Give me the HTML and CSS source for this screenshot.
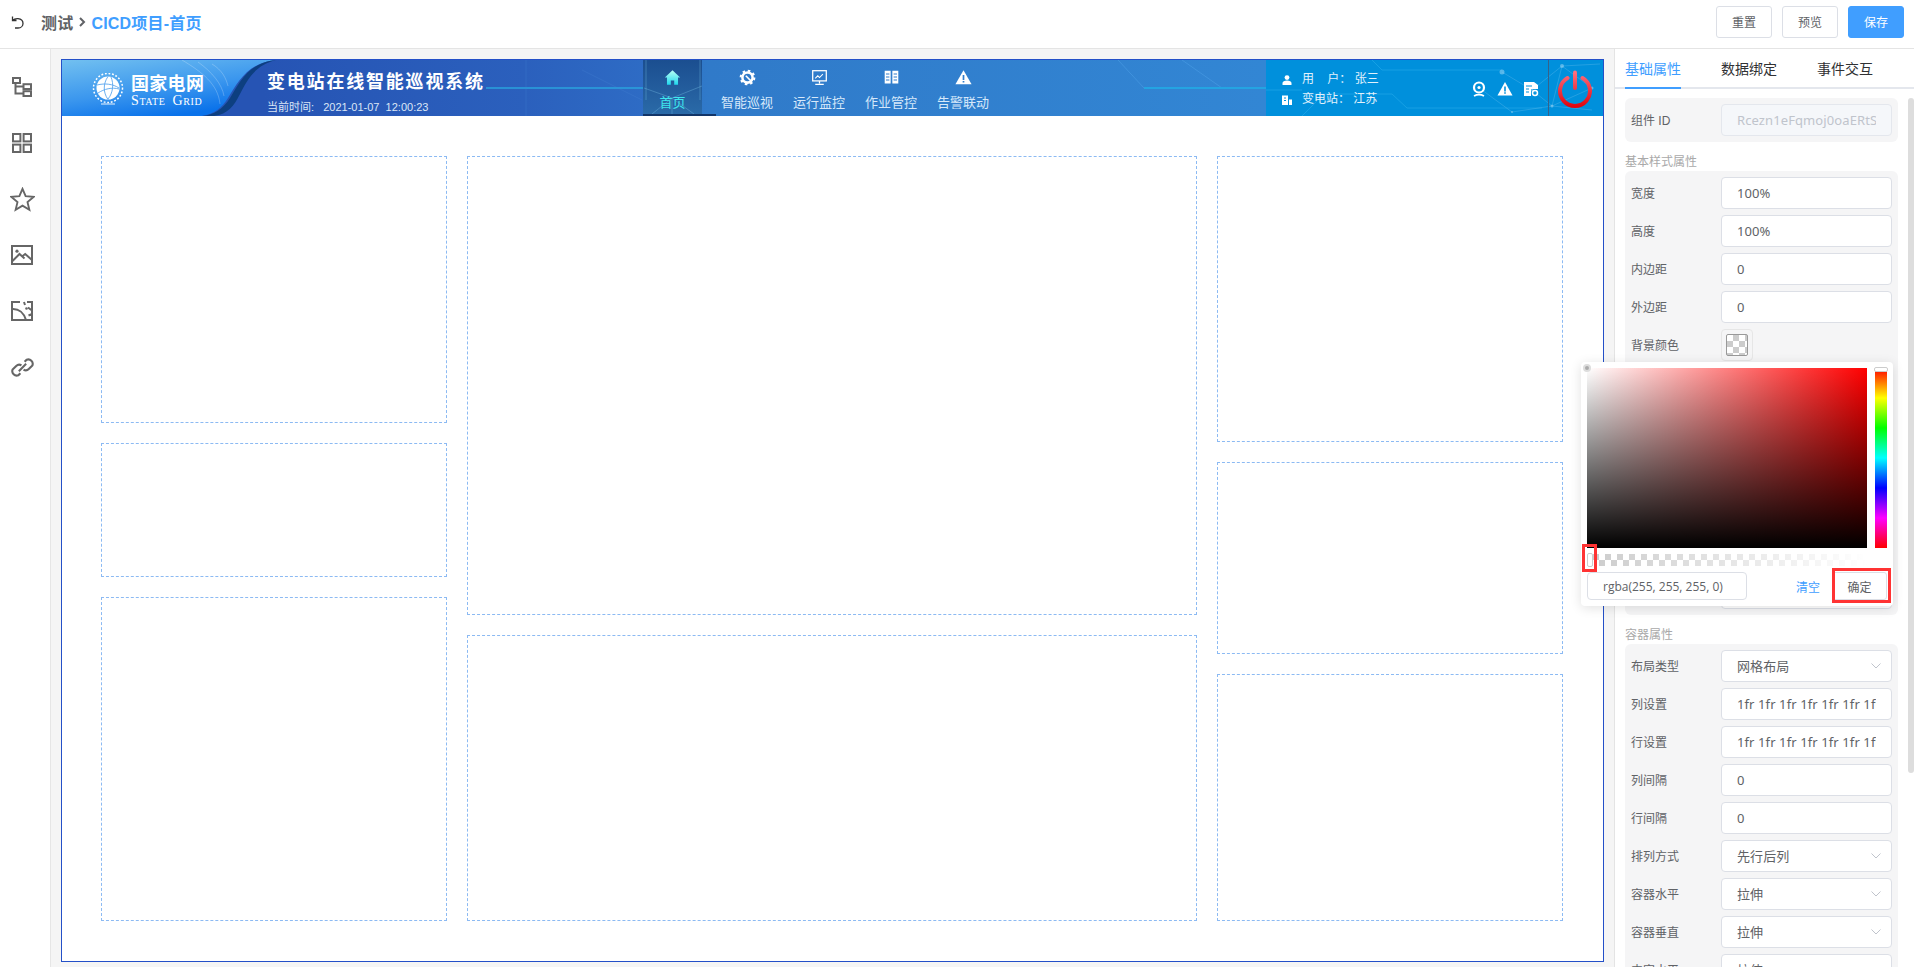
FILE: index.html
```html
<!DOCTYPE html>
<html lang="en">
<head>
<meta charset="UTF-8">
<meta name="viewport" content="width=device-width, initial-scale=1.0">
<title>CICD项目-首页</title>
<link rel="stylesheet" href="styles.css">
</head>
<body>
<div class="page">
    <div class="topbar">
        <svg class="back-icon" viewBox="0 0 14 14"><path d="M1.5 1.5v4h4M1.5 5.5C3 4 5 3.4 7 3.6c3 .3 5 2.4 5 4.8s-2 4.6-5 4.6H4"/></svg>
        <span class="crumb">测试</span>
        <svg class="crumb-sep" viewBox="0 0 8 12"><path d="M2 2l4 4-4 4"/></svg>
        <span class="crumb crumb-active">CICD项目-首页</span>
        <div class="top-actions">
            <button class="btn">重置</button>
            <button class="btn">预览</button>
            <button class="btn btn-primary">保存</button>
        </div>
    </div>
    <div class="main">
        <div class="sidebar">
            <div class="side-item"><svg viewBox="0 0 20 20"><rect x="1" y="1" width="7" height="5"/><rect x="11.5" y="7.2" width="7.5" height="4.8"/><rect x="11.5" y="14.2" width="7.5" height="4.8"/><path d="M3.5 6v10.5h8M3.5 9.5h8"/></svg></div>
            <div class="side-item"><svg viewBox="0 0 20 20"><rect x="1" y="1" width="7.4" height="7.4"/><rect x="11.6" y="1" width="7.4" height="7.4"/><rect x="1" y="11.6" width="7.4" height="7.4"/><rect x="11.6" y="11.6" width="7.4" height="7.4"/></svg></div>
            <div class="side-item"><svg class="big" viewBox="0 0 24 24"><path d="M12 1.8l3 7 7.6.7-5.8 5 1.8 7.4-6.6-4-6.6 4 1.8-7.4-5.8-5 7.6-.7z"/></svg></div>
            <div class="side-item"><svg class="wide" viewBox="0 0 22 20"><rect x="1" y="1" width="20" height="18"/><circle cx="6" cy="6.2" r="1.6" class="solid"/><path d="M1 16.5l7.5-7.5 5 4.5M11 11.5l3.2-2.5 6.8 6"/></svg></div>
            <div class="side-item"><svg class="wide" viewBox="0 0 22 20"><path d="M9 1H1v18h20V1h-5M1 8c7-.5 12 4 14 11M13 1l1 3M17 6.5l4 3M21 13l-3.5 1.5"/><circle cx="15.5" cy="7.5" r="1.3" class="solid"/></svg></div>
            <div class="side-item"><svg class="link" viewBox="0 0 22 22"><path d="M9 16.5l-2 2a4.300 4.300 0 0 1-5.500-5.500l3.500-3.500c1.500-1.500 3.500-1.500 5-.5M13 5.500l2-2a4.300 4.300 0 0 1 5.500 5.500L17 12.500c-1.500 1.500-3.500 1.500-5 .5M7.500 14.500l7-7"/></svg></div>
        </div>

        <div class="stage">
            <div class="frame">
                <div class="banner">
                    <svg class="banner-bg" viewBox="0 0 1541 56" preserveAspectRatio="none">
                        <defs>
                            <linearGradient id="base" x1="0" x2="1" y1="0" y2="0">
                                <stop offset="0.13" stop-color="#2654b4"/>
                                <stop offset="0.3" stop-color="#2b60bd"/>
                                <stop offset="0.38" stop-color="#2e6cc5"/>
                                <stop offset="0.42" stop-color="#307ac9"/>
                                <stop offset="0.78" stop-color="#3286d4"/>
                            </linearGradient>
                            <linearGradient id="brandfill" x1="0" x2="0.5" y1="0" y2="1">
                                <stop offset="0" stop-color="#72c0f0"/>
                                <stop offset="0.6" stop-color="#3a96ee"/>
                                <stop offset="1" stop-color="#0a72ea"/>
                            </linearGradient>
                            <linearGradient id="homefill" x1="0" x2="0" y1="0" y2="1">
                                <stop offset="0" stop-color="#1b4e90"/>
                                <stop offset="1" stop-color="#2a6aa8"/>
                            </linearGradient>
                        </defs>
                        <rect width="1541" height="56" fill="url(#base)"/>
                        <path d="M0 0H212C185 4 176 22 166 38 160 48 152 54 140 56H0z" fill="url(#brandfill)"/>
                        <path d="M214 0C186 3 178 22 168 38 161 49 152 55 140 56H152C166 54 172 46 178 34 186 18 194 5 214 0z" fill="#0d3f80"/>
                        <path d="M120 0c20 12 36 24 38 44M136 2c14 10 24 22 26 34M150 4c10 6 14 14 16 22" fill="none" stroke="#fff" stroke-opacity=".22"/>
                        <path d="M424 28H581" stroke="#2aa6e0" stroke-width="2" stroke-opacity=".7"/>
                        <path d="M464 0V56M520 10L580 40" stroke="#4a86d8" stroke-opacity=".25"/>
                        <rect x="581" y="0" width="59" height="54" fill="url(#homefill)"/>
                        <path d="M610 38L582 28M610 38L640 26M610 38L590 54M610 38L632 54M610 38V54M584 0V40M638 0V40" stroke="#7cc4e8" stroke-opacity=".35" fill="none"/>
                        <rect x="581" y="54" width="73" height="2" fill="#123568"/>
                        <path d="M1056 0L1082 28M1120 0L1160 28" fill="none" stroke="#4b9de4" stroke-opacity=".6"/>
                        <path d="M1082 28H1204" stroke="#24a4e2" stroke-width="2"/>
                        <rect x="1204" y="0" width="337" height="56" fill="#0090dc"/>
                        <path d="M1250 34H1330L1345 48H1480M1310 0L1320 10H1440M1204 30H1240M1240 56L1262 34" fill="none" stroke="#1ba4e6" stroke-opacity=".8"/>
                        <path d="M1440 12L1470 30 1500 6 1530 28 1490 46 1450 52M1470 30L1490 46 1530 50M1500 6L1538 4M1420 30L1450 52M1500 6L1490 46" fill="none" stroke="#8fd0f2" stroke-opacity=".25"/>
                        <g fill="#9ad6f4" fill-opacity=".55"><circle cx="1470" cy="30" r="1.5"/><circle cx="1500" cy="6" r="2"/><circle cx="1530" cy="28" r="1.5"/><circle cx="1490" cy="46" r="1.5"/><circle cx="1450" cy="52" r="1"/><circle cx="1440" cy="12" r="2.5"/></g>
                    </svg>
                    <div class="brand">
                        <svg class="globe" viewBox="0 0 34 34" fill="none">
                            <circle cx="17" cy="15" r="11.5" fill="#fff"/>
                            <path d="M6 12c8-2 16-1 22 3M7 20c6-4 14-6 21-4M17 3.500c-5 7-5 16 0 23M20 4c3 7 2 16-3 22" stroke="#5aa6ee" stroke-width=".9"/>
                            <circle cx="17" cy="15" r="14.5" stroke="#fff" stroke-width="1.5" stroke-dasharray="1.8 1.8"/>
                            <path d="M10 31h14" stroke="#fff" stroke-opacity=".6" stroke-width="1.5"/>
                        </svg>
                        <div>
                            <div class="brand-cn">国家电网</div>
                            <div class="brand-en">State Grid</div>
                        </div>
                    </div>
                    <div class="sys-title">
                        <div class="sys-name">变电站在线智能巡视系统</div>
                        <div class="sys-time">当前时间:&nbsp;&nbsp;&nbsp;2021-01-07&nbsp;&nbsp;12:00:23</div>
                    </div>
                    <div class="nav">
                        <div class="nav-item nav-home">
                            <svg viewBox="0 0 20 20"><defs><linearGradient id="cy" x1="0" x2="0" y1="0" y2="1"><stop offset="0" stop-color="#b8fff4"/><stop offset="1" stop-color="#1fd8ee"/></linearGradient></defs><path d="M10 1.5L19 10h-2.5v8.500H12v-5H8v5H3.500V10H1z" fill="url(#cy)"/></svg>
                            <span>首页</span>
                        </div>
                        <div class="nav-item">
                            <svg viewBox="0 0 20 20" fill="none"><circle cx="10" cy="10" r="6" stroke="#fff" stroke-width="3"/><circle cx="10" cy="10" r="8" stroke="#fff" stroke-width="2.5" stroke-dasharray="3 3.3"/><path d="M8 8l6 6" stroke="#fff" stroke-width="1.8"/></svg>
                            <span>智能巡视</span>
                        </div>
                        <div class="nav-item">
                            <svg viewBox="0 0 20 20" fill="none"><rect x="2" y="2" width="16" height="12" stroke="#fff" stroke-width="1.5"/><path d="M5 11l3-3 2 2 4-4" stroke="#fff" stroke-width="1.2"/><path d="M10 14v3M5 18h10" stroke="#fff" stroke-width="1.5"/></svg>
                            <span>运行监控</span>
                        </div>
                        <div class="nav-item">
                            <svg viewBox="0 0 20 20"><path d="M2 2h7v15H2zM11 2h7v15h-7z" fill="#fff"/><path d="M3.5 6h4M3.5 9.5h4M3.5 13h4M12.5 6h4M12.5 9.5h4M12.5 13h4" stroke="#317dcb" stroke-width="1.2"/></svg>
                            <span>作业管控</span>
                        </div>
                        <div class="nav-item">
                            <svg viewBox="0 0 20 20"><path d="M10 1.5L19.5 18H.5z" fill="#fff"/><path d="M9 7h2v6H9zM9 14h2v2H9z" fill="#317dcb"/></svg>
                            <span>告警联动</span>
                        </div>
                    </div>
                    <div class="status">
                        <div class="user-info">
                            <div class="user-line"><svg viewBox="0 0 10 10"><circle cx="5" cy="2.6" r="2.4" fill="#fff"/><path d="M.5 10V8c0-1.500 2-2.500 4.500-2.500S9.500 6.500 9.500 8v2z" fill="#fff"/></svg><span>用&nbsp;&nbsp;&nbsp;&nbsp;户：&nbsp;张三</span></div>
                            <div class="user-line"><svg viewBox="0 0 10 10"><path d="M0 .5h6V10H0zM7 4.500h3V10H7z" fill="#fff"/><path d="M2 3h2M2 5.500h2" stroke="#0090dc"/></svg><span>变电站：&nbsp;江苏</span></div>
                        </div>
                        <div class="status-icons">
                            <svg viewBox="0 0 16 16" fill="none"><circle cx="8" cy="6.5" r="5" stroke="#fff" stroke-width="2.2"/><circle cx="8" cy="6.5" r="1.6" fill="#fff"/><path d="M3 15c3-1.600 7-1.600 10 0" stroke="#fff" stroke-width="1.8"/></svg>
                            <svg viewBox="0 0 16 16"><path d="M8 1l7.500 13.500H.5z" fill="#fff"/><path d="M7.2 5.500h1.600v5H7.200zM7.200 11.300h1.600v1.500H7.200z" fill="#0090dc"/></svg>
                            <svg viewBox="0 0 16 16" fill="none"><path d="M1 1h10l4 3v4H8v7H1z" fill="#fff"/><path d="M3 5h6M3 8h3M3 11h3" stroke="#0090dc" stroke-width="1.2"/><circle cx="12" cy="12" r="2.5" stroke="#fff" stroke-width="1.5"/></svg>
                        </div>
                        <div class="power">
                            <svg viewBox="0 0 34 38" fill="none">
                                <defs>
                                    <linearGradient id="powerfill" gradientUnits="userSpaceOnUse" x1="0" x2="0" y1="2" y2="36">
                                        <stop offset="0" stop-color="#ff7080"/>
                                        <stop offset="1" stop-color="#e00610"/>
                                    </linearGradient>
                                </defs>
                                <path d="M9.5 8A15 15 0 1 0 24.5 8" stroke="url(#powerfill)" stroke-width="4" stroke-linecap="round"/>
                                <path d="M17 2.500V18" stroke="url(#powerfill)" stroke-width="4" stroke-linecap="round"/>
                            </svg>
                        </div>
                    </div>
                </div>
                <div class="layout-grid">
                    <div class="layout-col">
                        <div class="cell r267"></div>
                        <div class="cell r133"></div>
                        <div class="cell r325"></div>
                    </div>
                    <div class="layout-col">
                        <div class="cell r459"></div>
                        <div class="cell r286"></div>
                    </div>
                    <div class="layout-col">
                        <div class="cell r287"></div>
                        <div class="cell r192"></div>
                        <div class="cell r248"></div>
                    </div>
                </div>
            </div>
        </div>

        <div class="panel">
            <div class="tabs">
                <div class="tab tab-active">基础属性</div>
                <div class="tab">数据绑定</div>
                <div class="tab">事件交互</div>
            </div>
            <div class="panel-body">
                <div class="group">
                    <div class="row"><label>组件 ID</label><input class="field" disabled value="Rcezn1eFqmoj0oaERtS9x2"></div>
                </div>
                <div class="group-title">基本样式属性</div>
                <div class="group">
                    <div class="row"><label>宽度</label><input class="field" value="100%"></div>
                    <div class="row"><label>高度</label><input class="field" value="100%"></div>
                    <div class="row"><label>内边距</label><input class="field" value="0"></div>
                    <div class="row"><label>外边距</label><input class="field" value="0"></div>
                    <div class="row"><label>背景颜色</label><div class="swatch"><div class="swatch-inner"></div></div></div>
                    <div class="hidden-rows"></div>
                    <div class="row"><label></label><input class="field"></div>
                </div>
                <div class="group-title">容器属性</div>
                <div class="group">
                    <div class="row"><label>布局类型</label><div class="field select">网格布局<svg viewBox="0 0 10 6"><path d="M.5.5L5 5 9.5.5"/></svg></div></div>
                    <div class="row"><label>列设置</label><input class="field" value="1fr 1fr 1fr 1fr 1fr 1fr 1fr 1fr 1fr 1fr"></div>
                    <div class="row"><label>行设置</label><input class="field" value="1fr 1fr 1fr 1fr 1fr 1fr 1fr 1fr 1fr 1fr"></div>
                    <div class="row"><label>列间隔</label><input class="field" value="0"></div>
                    <div class="row"><label>行间隔</label><input class="field" value="0"></div>
                    <div class="row"><label>排列方式</label><div class="field select">先行后列<svg viewBox="0 0 10 6"><path d="M.5.5L5 5 9.5.5"/></svg></div></div>
                    <div class="row"><label>容器水平</label><div class="field select">拉伸<svg viewBox="0 0 10 6"><path d="M.5.5L5 5 9.5.5"/></svg></div></div>
                    <div class="row"><label>容器垂直</label><div class="field select">拉伸<svg viewBox="0 0 10 6"><path d="M.5.5L5 5 9.5.5"/></svg></div></div>
                    <div class="row"><label>内容水平</label><div class="field select">拉伸<svg viewBox="0 0 10 6"><path d="M.5.5L5 5 9.5.5"/></svg></div></div>
                </div>
            </div>
            <div class="scroll-thumb"></div>
        </div>
    </div>
</div>

<div class="picker">
    <div class="picker-top">
        <div class="sv-panel"><div class="sv-cursor"></div></div>
        <div class="hue-bar"><div class="hue-thumb"></div></div>
    </div>
    <div class="alpha-bar"><div class="alpha-thumb"></div></div>
    <div class="picker-bottom">
        <input class="picker-value" value="rgba(255, 255, 255, 0)">
        <a class="picker-clear">清空</a>
        <button class="picker-ok">确定</button>
    </div>
    <div class="mark mark-alpha"></div>
    <div class="mark mark-ok"></div>
</div>
</body>
</html>
```

FILE: styles.css
```css
* {
    box-sizing: border-box;
}
body {
    font-family: "Liberation Sans", "Noto Sans CJK SC", sans-serif;
    margin: 0;
    padding: 0;
    color: #606266;
    background-color: #fff;
}
.page {
    display: flex;
    flex-direction: column;
    height: 100vh;
    overflow: hidden;
}

/* top bar */
.topbar {
    display: flex;
    align-items: center;
    height: 49px;
    flex-shrink: 0;
    padding: 0 10px 5px 11px;
    border-bottom: 1px solid #e4e4e4;
}
.back-icon {
    width: 14px;
    height: 14px;
    margin-right: 16px;
    fill: none;
    stroke: #333;
    stroke-width: 1.3;
}
.crumb {
    font-size: 16px;
    font-weight: 700;
    letter-spacing: 0.2px;
    color: #606266;
}
.crumb-active {
    color: #409eff;
}
.crumb-sep {
    width: 8px;
    height: 12px;
    margin: 0 5px 0 5px;
    fill: none;
    stroke: #606266;
    stroke-width: 2;
}
.top-actions {
    display: flex;
    gap: 10px;
    margin-left: auto;
}
.btn {
    width: 56px;
    height: 32px;
    padding: 0;
    font: inherit;
    font-size: 12px;
    color: #606266;
    background-color: #fff;
    border: 1px solid #dcdfe6;
    border-radius: 3px;
}
.btn-primary {
    color: #fff;
    background-color: #409eff;
    border-color: #409eff;
}

.main {
    display: flex;
    flex: 1;
    min-height: 0;
}

/* left icon rail */
.sidebar {
    width: 51px;
    flex-shrink: 0;
    padding-top: 10px;
    border-right: 1px solid #e6e6e6;
}
.side-item {
    display: flex;
    align-items: center;
    justify-content: center;
    height: 56px;
    padding-right: 6px;
}
.side-item svg {
    width: 20px;
    height: 20px;
    fill: none;
    stroke: #666;
    stroke-width: 2;
}
.side-item svg.big {
    width: 25px;
    height: 25px;
    stroke-width: 1.8;
}
.side-item svg.wide {
    width: 22px;
    height: 20px;
}
.side-item svg.link {
    width: 23px;
    height: 23px;
}
.side-item .solid {
    fill: #666;
    stroke: none;
}

/* canvas */
.stage {
    flex: 1;
    min-width: 0;
    padding: 10px 10px 5px 10px;
    background-color: #f5f5f5;
}
.frame {
    display: flex;
    flex-direction: column;
    height: 100%;
    background-color: #fff;
    border: 1px solid #2450c8;
}
.banner {
    position: relative;
    display: flex;
    height: 56px;
    flex-shrink: 0;
    color: #fff;
    outline: 1px dashed rgba(255, 255, 255, 0.9);
    outline-offset: -1px;
}
.banner > * {
    position: relative;
}
.banner .banner-bg {
    position: absolute;
    top: 0;
    left: 0;
    width: 100%;
    height: 100%;
}
.brand {
    display: flex;
    align-items: center;
    gap: 6px;
    width: 205px;
    padding-left: 29px;
}
.globe {
    width: 34px;
    height: 34px;
    margin-top: 4px;
}
.brand-cn {
    font-size: 18px;
    font-weight: 700;
    line-height: 20px;
    letter-spacing: 0.3px;
    margin-top: 6px;
}
.brand-en {
    font-family: "Liberation Serif", serif;
    font-size: 14px;
    line-height: 14px;
    font-variant: small-caps;
    letter-spacing: 0.6px;
    word-spacing: 3px;
    white-space: nowrap;
}
.sys-title {
    width: 376px;
}
.sys-name {
    font-size: 18px;
    font-weight: 700;
    line-height: 24px;
    letter-spacing: 1.8px;
    margin-top: 10px;
}
.sys-time {
    font-size: 11px;
    line-height: 16px;
    margin-top: 5px;
    color: #dbe6f6;
}
.nav {
    display: flex;
}
.nav-item {
    display: flex;
    flex-direction: column;
    align-items: center;
    width: 72px;
    padding-top: 9px;
    font-size: 13px;
    color: #d6e8fa;
}
.nav-item svg {
    width: 17px;
    height: 17px;
    margin-bottom: 8px;
}
.nav-item span {
    line-height: 18px;
}
.nav-home {
    width: 59px;
    margin-right: 9px;
    color: #3ee6ee;
}
.status {
    display: flex;
    align-items: center;
    margin-left: auto;
    width: 337px;
    padding-left: 16px;
}
.user-info {
    display: flex;
    flex-direction: column;
    gap: 3px;
    margin-top: 3px;
}
.user-line {
    display: flex;
    align-items: center;
    gap: 10px;
    font-size: 12px;
    line-height: 17px;
    color: #e2f2fc;
    white-space: nowrap;
}
.user-line svg {
    width: 10px;
    height: 10px;
}
.status-icons {
    display: flex;
    gap: 10px;
    margin-left: auto;
    padding-right: 9px;
    margin-top: 1px;
}
.status-icons svg {
    width: 16px;
    height: 16px;
}
.power {
    display: flex;
    align-items: center;
    justify-content: center;
    width: 55px;
    height: 100%;
    padding: 1px 2px 0 0;
    border-left: 1px solid #35618a;
}
.power svg {
    width: 34px;
    height: 38px;
}

/* dashed layout cells */
.layout-grid {
    flex: 1;
    display: grid;
    grid-template-columns: 346px 1fr 346px;
    gap: 20px;
    padding: 40px 40px 40px 39px;
}
.layout-col {
    display: flex;
    flex-direction: column;
    gap: 20px;
}
.cell {
    flex-basis: 0;
    border: 1px dashed #8cbaf3;
}
.r267 { flex-grow: 267; }
.r133 { flex-grow: 133; }
.r325 { flex-grow: 325; }
.r459 { flex-grow: 459; }
.r286 { flex-grow: 286; }
.r287 { flex-grow: 287; }
.r192 { flex-grow: 192; }
.r248 { flex-grow: 248; }

/* right panel */
.panel {
    position: relative;
    width: 300px;
    flex-shrink: 0;
    overflow: hidden;
    border-left: 1px solid #e4e4e4;
}
.tabs {
    display: flex;
    gap: 40px;
    height: 40px;
    padding-left: 10px;
    border-bottom: 2px solid #e4e7ed;
}
.tab {
    height: 40px;
    font-size: 14px;
    line-height: 40px;
    color: #303133;
}
.tab-active {
    color: #409eff;
    border-bottom: 2px solid #409eff;
}
.panel-body {
    padding: 9px 16px 0 10px;
}
.group {
    display: flex;
    flex-direction: column;
    gap: 6px;
    padding: 6px;
    background-color: #f5f5f6;
    border-radius: 6px;
}
.group-title {
    height: 29px;
    padding-top: 11px;
    font-size: 12px;
    line-height: 18px;
    color: #a9a9a9;
}
.row {
    display: flex;
    align-items: center;
    height: 32px;
    flex-shrink: 0;
}
.row label {
    width: 90px;
    flex-shrink: 0;
    padding-bottom: 2px;
    font-size: 12px;
}
.hidden-rows {
    height: 204px;
}
.field {
    display: flex;
    align-items: center;
    width: 171px;
    height: 32px;
    padding: 0 15px 1px;
    font-family: "Noto Sans", "Noto Sans CJK SC", sans-serif;
    font-size: 13px;
    letter-spacing: 0.1px;
    color: #606266;
    background-color: #fff;
    border: 1px solid #dcdfe6;
    border-radius: 4px;
    outline: none;
}
.field:disabled {
    color: #c0c4cc;
    background-color: #f5f7fa;
    border-color: #e4e7ed;
}
.select {
    justify-content: space-between;
    padding-right: 10px;
}
.select svg {
    width: 10px;
    height: 6px;
    fill: none;
    stroke: #c0c4cc;
}
.swatch {
    width: 32px;
    height: 32px;
    padding: 4px;
    border: 1px solid #e6e6e6;
    border-radius: 4px;
}
.swatch-inner {
    width: 100%;
    height: 100%;
    border: 1px solid #999;
    border-radius: 2px;
    background: conic-gradient(#ccc 25%, #fff 0 50%, #ccc 0 75%, #fff 0) 0 0 / 12px 12px;
}
.scroll-thumb {
    position: absolute;
    top: 49px;
    right: 0;
    width: 6px;
    height: 675px;
    background-color: #ddd;
    border-radius: 3px;
}

/* colour picker popup */
.picker {
    position: absolute;
    top: 362px;
    left: 1581px;
    width: 312px;
    height: 244px;
    padding: 6px;
    background-color: #fff;
    border-radius: 4px;
    box-shadow: 0 2px 12px rgba(0, 0, 0, 0.12);
}
.picker-top {
    display: flex;
    gap: 8px;
}
.sv-panel {
    position: relative;
    width: 280px;
    height: 180px;
    background: linear-gradient(to top, #000, transparent), linear-gradient(to right, #fff, #f00);
}
.sv-cursor {
    position: absolute;
    top: -4px;
    left: -4px;
    width: 8px;
    height: 8px;
    background-color: #aaa;
    border: 2px solid #ddd;
    border-radius: 50%;
}
.hue-bar {
    position: relative;
    width: 12px;
    height: 180px;
    background: linear-gradient(to bottom, #f00, #ff0, #0f0, #0ff, #00f, #f0f, #f00);
}
.hue-thumb {
    position: absolute;
    top: -1px;
    left: -1px;
    width: 14px;
    height: 5px;
    background-color: #fff;
    border: 1px solid #ccc;
    border-radius: 2px;
}
.alpha-bar {
    position: relative;
    width: 280px;
    height: 12px;
    margin-top: 6px;
    background: linear-gradient(to right, rgba(255, 255, 255, 0), #fff), conic-gradient(#ccc 25%, #fff 0 50%, #ccc 0 75%, #fff 0) 0 0 / 12px 12px;
}
.alpha-thumb {
    position: absolute;
    top: -1px;
    left: 0;
    width: 6px;
    height: 14px;
    background-color: #fff;
    border: 1px solid #ccc;
    border-radius: 2px;
}
.picker-bottom {
    display: flex;
    align-items: center;
    margin-top: 6px;
}
.picker-value {
    width: 160px;
    height: 28px;
    padding: 0 15px;
    font-family: "Open Sans", "Noto Sans CJK SC", sans-serif;
    font-size: 12px;
    color: #606266;
    border: 1px solid #dcdfe6;
    border-radius: 4px;
    outline: none;
}
.picker-clear {
    margin-left: auto;
    margin-right: 12px;
    font-size: 12px;
    color: #409eff;
}
.picker-ok {
    width: 55px;
    height: 28px;
    padding: 0;
    font: inherit;
    font-size: 12px;
    color: #606266;
    background-color: #fff;
    border: 1px solid #dcdfe6;
    border-radius: 3px;
}
.mark {
    position: absolute;
    border: 3px solid #f33;
}
.mark-alpha {
    top: 182px;
    left: 1px;
    width: 15px;
    height: 28px;
}
.mark-ok {
    top: 206px;
    left: 251px;
    width: 59px;
    height: 35px;
}
```
